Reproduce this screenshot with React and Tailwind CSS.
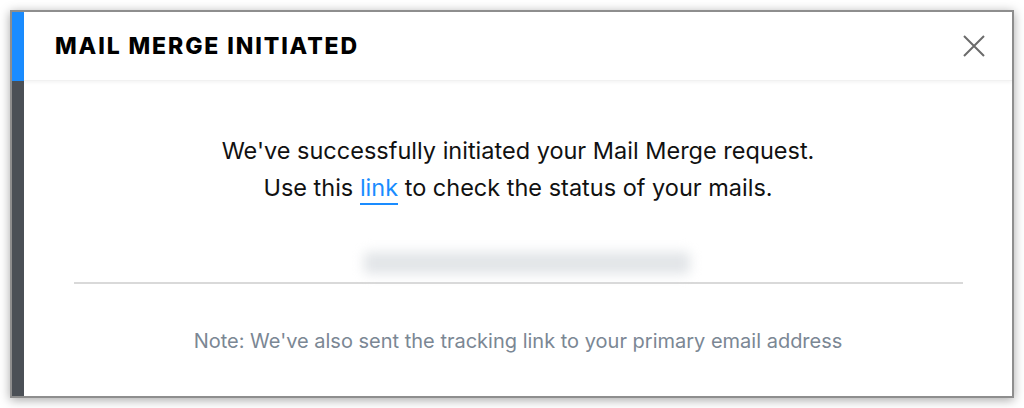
import React from "react";

const CloseIcon = () => (
	<svg width="22" height="22" viewBox="0 0 22 22" fill="none">
		<path d="M1 1L21 21M21 1L1 21" stroke="#6b6b6b" strokeWidth="2" />
	</svg>
);

const App = () => {
	return (
		<div className="w-[1024px] h-[408px] bg-white pl-[10px] pt-[10px] font-['Inter',sans-serif]">
			<div className="w-[1004px] h-[388px] border-2 border-[#8e8e8e] shadow-[0_2px_10px_rgba(0,0,0,0.35)] flex bg-white">
				{/* side strip */}
				<div className="w-3 flex flex-col">
					<div className="h-[69px] bg-[#1a8cff]" />
					<div className="flex-1 bg-[#4b5056]" />
				</div>

				<div className="flex-1 flex flex-col">
					{/* header */}
					<div className="h-[69px] flex items-center justify-between pl-[31px] pr-[27px] shadow-[0_2px_3px_rgba(0,0,0,0.04)] border-b border-[#f1f1f1]">
						<h1 className="text-[23px] font-extrabold text-black tracking-[1.9px] pt-[1px]">
							MAIL MERGE INITIATED
						</h1>
						<button className="p-0">
							<CloseIcon />
						</button>
					</div>

					{/* body */}
					<div className="flex-1 flex flex-col items-center pt-[51px]">
						<p className="text-[23.5px] leading-[37px] text-[#111] text-center">
							We've successfully initiated your Mail Merge request.
							<br />
							Use this{" "}
							<a className="text-[#1a8cff] border-b-2 border-[#1a8cff] pb-[1px]">link</a> to check the
							status of your mails.
						</p>

						<div className="mt-[42px] ml-[18px] h-[30px] w-[326px] flex items-center">
							<div className="w-full h-[22px] bg-[#e2e5e8] blur-[6px] rounded" />
						</div>

						<hr className="w-[889px] mt-[4px] border-t-2 border-[#d9d9d9]" />

						<p className="mt-[42px] text-[20px] text-[#7b8794] text-center">
							Note: We've also sent the tracking link to your primary email address
						</p>
					</div>
				</div>
			</div>
		</div>
	);
};

export default App;
